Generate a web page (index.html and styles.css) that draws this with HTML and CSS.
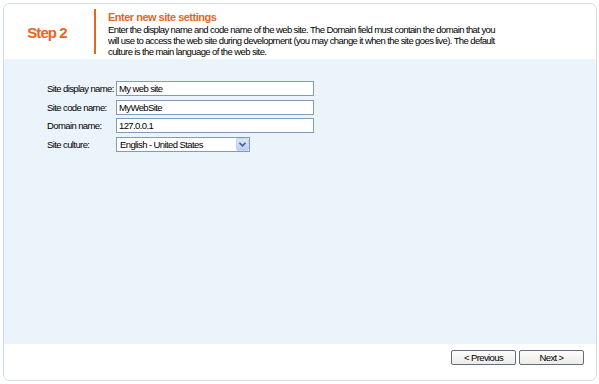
FILE: index.html
```html
<!DOCTYPE html>
<html lang="en">
<head>
    <meta charset="UTF-8">
    <title>New site wizard</title>
    <link rel="stylesheet" href="styles.css">
</head>
<body>
    <div class="wizard">
        <!-- Header -->
        <div class="wizard-header">
            <div class="step">Step 2</div>
            <div class="step-info">
                <div class="step-title">Enter new site settings</div>
                <div class="step-text">Enter the display name and code name of the web site. The Domain field must contain the domain that you<br>will use to access the web site during development (you may change it when the site goes live). The default<br>culture is the main language of the web site.</div>
            </div>
        </div>

        <!-- Content -->
        <div class="wizard-content">
            <div class="form">
                <label for="display-name">Site display name:</label>
                <input type="text" id="display-name" class="text-box" value="My web site">
                <label for="code-name">Site code name:</label>
                <input type="text" id="code-name" class="text-box" value="MyWebSite">
                <label for="domain">Domain name:</label>
                <input type="text" id="domain" class="text-box" value="127.0.0.1">
                <label for="culture">Site culture:</label>
                <div class="select-box" id="culture">
                    <span>English - United States</span>
                    <span class="select-arrow">
                        <svg width="7" height="5" viewBox="0 0 7 5"><path d="M0.5 0.8 L3.5 3.8 L6.5 0.8" fill="none" stroke="#4d6185" stroke-width="1.6"/></svg>
                    </span>
                </div>
            </div>
        </div>

        <!-- Footer -->
        <div class="wizard-footer">
            <button class="button">&lt; Previous</button>
            <button class="button">Next &gt;</button>
        </div>
    </div>
</body>
</html>
```

FILE: styles.css
```css
* {
    margin: 0;
    padding: 0;
    box-sizing: border-box;
}

body {
    background-color: #fff;
    font-family: "Liberation Sans", Arial, sans-serif;
    font-size: 9.5px;
    letter-spacing: -0.6px;
    color: #000;
}

.wizard {
    margin: 3px;
    width: 594px;
    height: 378px;
    border: 1px solid #cfdde9;
    border-radius: 7px;
    display: flex;
    flex-direction: column;
    overflow: hidden;
}

.wizard-header {
    display: flex;
    height: 55px;
    background-color: #fff;
}

.step {
    width: 90px;
    padding: 20px 4px 0 0;
    text-align: center;
    font-size: 15px;
    letter-spacing: -0.9px;
    font-weight: bold;
    color: #e4661f;
}

.step-info {
    margin: 5px 0;
    border-left: 2px solid #e4661f;
    padding: 2px 0 0 12px;
    width: 430px;
}

.step-title {
    font-weight: bold;
    font-size: 11px;
    letter-spacing: -0.5px;
    color: #e4661f;
    line-height: 13px;
}

.step-text {
    line-height: 11px;
    white-space: nowrap;
}

.wizard-content {
    flex: 1;
    background-color: #ebf4fb;
    padding: 22px 0 0 43px;
}

.form {
    display: grid;
    grid-template-columns: 69px auto;
    row-gap: 3.7px;
    align-items: center;
    justify-items: start;
}

.text-box {
    width: 198px;
    height: 15px;
    border: 1px solid #7f9db9;
    padding: 0 2px;
    font-family: "Liberation Sans", Arial, sans-serif;
    font-size: 9.5px;
    letter-spacing: -0.6px;
    color: #000;
    background-color: #fff;
    outline: none;
}

.select-box {
    width: 134px;
    height: 15px;
    border: 1px solid #7f9db9;
    background-color: #fff;
    display: flex;
    align-items: center;
    justify-content: space-between;
    padding-left: 3px;
}

.select-arrow {
    width: 13px;
    height: 13px;
    background: linear-gradient(#dde7fc, #b9cdf5);
    border: 1px solid #c3d3fd;
    border-radius: 2px;
    display: flex;
    align-items: center;
    justify-content: center;
}

.wizard-footer {
    height: 36px;
    background-color: #fff;
    display: flex;
    justify-content: flex-end;
    align-items: flex-start;
    padding: 6px 12px 0 0;
    gap: 3px;
}

.button {
    width: 65px;
    height: 15px;
    border: 1px solid #5f6e83;
    border-radius: 2px;
    background: linear-gradient(#fdfdfd, #ecebe6);
    font-family: "Liberation Sans", Arial, sans-serif;
    font-size: 9.5px;
    letter-spacing: -0.6px;
    color: #000;
    cursor: pointer;
}
```
